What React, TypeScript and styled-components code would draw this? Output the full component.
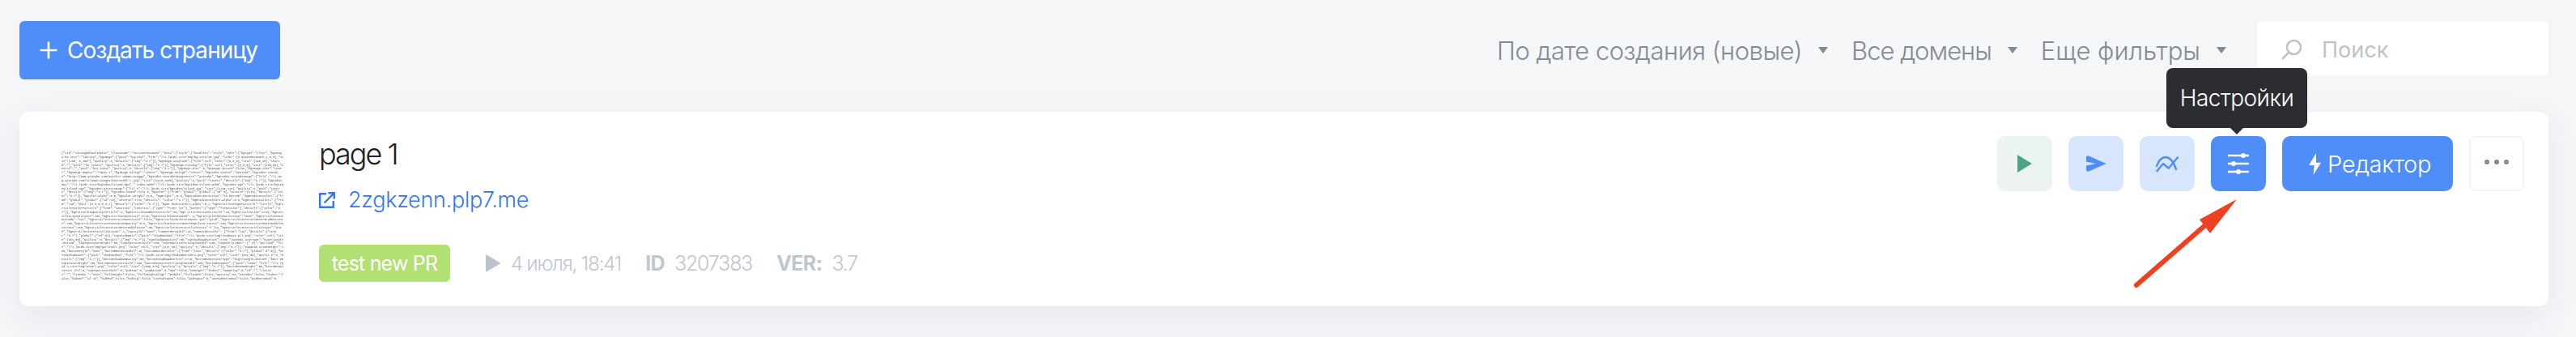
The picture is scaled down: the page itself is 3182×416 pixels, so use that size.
import styled, { createGlobalStyle } from "styled-components";
import { Plus } from "lucide-react";

const thumbText = `{"sid":"secoXQbdh94f3ipzzz","className":"SectionMetaHtml","data":{"style":{"headlers":"style","edit":{"bgType":"clear","bgImage.bo
urce":"library","bgImage":{"pack":"bg-tech","file":"//i.lpcdn.site/img/bg-tech/10.jpg","color":[0.5444850290913,1,0.5],"size":[200,
0,100"],"quality":8,"details":{"img":"3.7"}},"bgImage.Unsplash":{"file":null,"color":[0,0,0],"size":[200,80],"search":"","pack":"bu
siness","quality":8,"details":{"img":"3.7"}},"bgImage.Pixabay":{"file":null,"color":[0,0,0],"size":[200,80],"search":"","pack":"bus
iness","quality":3,"details":{"img":"3.7"}},"bgImage.Blur":0,"bgImage.Attach":false,"bgImage.Size":"cover","bgImage.Repeat":"repea
t","bgImage.Valign":"center","bgImage.Halign":"center","bgVideo.Source":"youtube","bgVideo.Youtube":"http://www.youtube.com/watch?v
=Down-M2ZQQA","bgVideo.YoutubeImageSource":"youtube","bgVideo.YoutubeImage":{"file":"//i.img.youtube.com/vi/Down-M2ZQ04/maxresdef
t.jpg","size":[1920,1080],"quality":8,"pack":"covers","details":{"img":"3.7"}},"bgVideo.Mp4":"//i.lpcdn.site/bgvideo/island.mp4","
Video.WebM":"//i.lpcdn.site/bgvideo/island.webm","bgVideo.Ogv":"//i.lpcdn.site/bgvideo/island.ogv","bgVideo.DirectImage":{"fil
e":"//i.lpcdn.site/bgvideo/island.jpg","size":[1280,720],"quality":8,"pack":"covers","details":{"img":"3.7"}},"bgVideo.Sound":fals
e,"bgColor":{"from":"global","global":{"id":0},"inverse":false,"details":{"color":"3.7"}},"bgColor.Alpha":0.5,"bgColor.Bright":0.5,
"bgBright":-0.5,"bgGradientDirection":"to bottom","bgGradientColor1":{"from":"global","global":{"id":26},"inverse":true,"details":
"color":"3.7"}},"bgGradientColor1.Alpha":0.6,"bgGradientColor2":{"from":"raw","data":[0.5,0.5,0.2],"details":{"color":"3.7"}},"bgGr
dientColor2.Alpha":0.2,"bgParticlesShapeParticle":"circle","bgParticlesColorParticle":{"from":"contrast","contrast":{"type":"front
lor"},"parent":{"type":"frontcolor"},"details":{"color":"3.7"}},"bgParticlesOpacityParticle":1,"bgParticlesNumberParticle":30,"bgP
articlesSizeParticle":15,"bgParticlesLine":true,"bgParticlesLineDistance":150,"bgParticlesMoveState":true,"bgParticlesMoveSpeed":
2,"bgParticlesMoveDirection":"none","bgParticlesMoveOutMode":"out","bgParticlesInteractHoverState":false,"bgParticlesInteractHover
ype":"grab","bgParticlesInteractHoverGrabDistance":250,"bgParticlesInteractHoverGrabOpacity":0.6,"bgParticlesInteractHoverRepulseD
stance":150,"bgParticlesInteractHoverBubbleDistance":150,"bgParticlesInteractHoverBubbleSize":30,"bgParticlesInteractClickState":f
lse,"bgParticlesInteractClickType":"push","bgParticlesInteractClickCount":2,"topStyle":"none","topBorderWidth":10,"topBorderColor":
{"from":"raw","details":{"color":"3.7"},"global":{"id":0}},"topShadowOvr":{"pack":"shadowxbow","file":"//i.lpcdn.site/img/shadowto
p/1.png","color":null,"size":[981,50],"quality":8,"details":{"img":"3.7"}},"topShadowOpacity":50,"topShadowAbsolute":true,"topSepa
atorType":"bigTriangle-bottom","topSeparatorHeight":50,"topSeparatorScale":100,"topSeparatorTriangleWidth":100,"topOverlaidOvr":{"
ck":"garland","file":"//i.lpcdn.site/img/garland/1.png","color":null,"size":[847,80],"quality":8,"details":{"img":"3.7"}},"topAnim
ationHeight":100,"bottomStyle":"none","bottomBorderWidth":10,"bottomBorderColor":{"from":"root","details":{"color":"3.7"},"global"
d":0}},"bottomShadowOvr":{"pack":"shadowxbow","file":"//i.lpcdn.site/img/shadowbottom/1.png","color":null,"size":[981,50],"qualit
y":8,"details":{"img":"3.7"}},"bottomShadowOpacity":50,"bottomShadowAbsolute":true,"bottomSeparatorType":"bigTriangle-bottom","bott
omSeparatorHeight":50,"bottomSeparatorScale":100,"bottomSeparatorTriangleWidth":100,"bottomSnowOvr":{"pack":"snow","file":"//i.lpcd
n.site/img/snow/1.png","color":null,"size":[2500,375],"quality":8,"details":{"img":"3.7"}},"bottomSnowHeight":50,"bottomSeparatorS
ift":0,"topSeparatorShift":0,"padTop":0,"padBottom":0,"wow":false,"wowType":"fadeIn","wowDelay":0,"id":"","classes":"","fixedIn
":"none","fullHeight":false,"fullHeightAlign":"middle","fullWidth":false,"opacity":50,"noIndex":false,"hideVr":false,"hideOn":"al
se","hideMd":false,"hideLg":false,"usePadTopVw":false,"padTopVw":5,"usePadBottomVw":false,"padBottomVw":5`;

const GlobalStyle = createGlobalStyle`
  html, body {
    margin: 0;
    padding: 0;
    background: #f4f6f8;
  }
  body {
    font-family: Inter, "Liberation Sans", sans-serif;
  }
`;

const Page = styled.div`
  width: 3182px;
  height: 416px;
  overflow: hidden;
  padding: 26px 34px 0 24px;
  box-sizing: border-box;
  background: #f4f6f8;
`;

const TopBar = styled.div`
  display: flex;
  align-items: flex-start;
  height: 72px;
  margin-bottom: 40px;
`;

const CreateButton = styled.div`
  display: flex;
  align-items: center;
  gap: 7px;
  width: 322px;
  height: 72px;
  box-sizing: border-box;
  padding-left: 20px;
  background: #4f8df8;
  border-radius: 6px;
  color: #fff;
  font-size: 28px;
  letter-spacing: -0.9px;
  white-space: nowrap;
`;

const Filters = styled.div`
  display: flex;
  align-items: flex-start;
  margin-left: auto;
`;

const Filter = styled.div<{ $gap: number; $spacing: number }>`
  display: flex;
  align-items: center;
  gap: 20px;
  height: 72px;
  margin-right: ${(p) => p.$gap}px;
  color: #838c95;
  font-size: 31px;
  font-weight: 300;
  letter-spacing: ${(p) => p.$spacing}px;
  white-space: nowrap;
`;

const Caret = styled.span`
  width: 0;
  height: 0;
  border-left: 6px solid transparent;
  border-right: 6px solid transparent;
  border-top: 8px solid #838c95;
`;

const Search = styled.div`
  display: flex;
  align-items: center;
  gap: 24px;
  width: 360px;
  height: 68px;
  box-sizing: border-box;
  padding: 2px 0 0 30px;
  background: #fff;
  border-radius: 6px;
  color: #bcc3ca;
  font-size: 27px;
  font-weight: 400;
`;

const Card = styled.div`
  display: flex;
  align-items: stretch;
  height: 240px;
  box-sizing: border-box;
  padding: 46px 30px 30px 48px;
  background: #fff;
  border-radius: 12px;
  box-shadow: 0 12px 40px rgba(60, 70, 90, 0.08);
`;

const Thumb = styled.div`
  width: 284px;
  height: 163px;
  flex-shrink: 0;
  overflow: hidden;
  margin-right: 38px;
  padding: 3px 4px 0;
  box-sizing: border-box;
  background: #fbfbfb;
  color: #555;
  font-family: "Liberation Mono", monospace;
  font-size: 3.6px;
  line-height: 4.85px;
  word-break: break-all;
  filter: blur(0.2px);
`;

const Info = styled.div`
  display: flex;
  flex-direction: column;
  align-items: flex-start;
  flex: 1;
`;

const Title = styled.div`
  margin-top: -19px;
  height: 50px;
  color: #1f2126;
  font-size: 36px;
  line-height: 50px;
  font-weight: 300;
  letter-spacing: -2px;
`;

const DomainLink = styled.div`
  display: flex;
  align-items: center;
  gap: 16px;
  margin-top: 12px;
  color: #3277f0;
  font-size: 27px;
  font-weight: 300;
  line-height: 40px;
  letter-spacing: -0.3px;
`;

const MetaRow = styled.div`
  display: flex;
  align-items: center;
  margin-top: auto;
  color: #c0c6ce;
  font-size: 25px;
  font-weight: 300;
  letter-spacing: -1.2px;
  white-space: nowrap;
`;

const Tag = styled.div`
  display: flex;
  align-items: center;
  justify-content: center;
  width: 162px;
  height: 46px;
  margin-right: 43px;
  background: #b1e073;
  border-radius: 6px;
  color: #fff;
  font-size: 25px;
  font-weight: 400;
  letter-spacing: -0.8px;
`;

const MetaItem = styled.div`
  display: flex;
  align-items: center;
  gap: 12px;
  margin-right: 30px;
`;

const DateText = styled.span`
  font-size: 24px;
  letter-spacing: -1.15px;
`;

const MetaLabel = styled.b`
  font-weight: 700;
  letter-spacing: -0.6px;
`;

const Actions = styled.div`
  display: flex;
  align-items: flex-start;
  gap: 20px;
  margin-top: -16px;
`;

const IconButton = styled.div<{ $bg: string }>`
  position: relative;
  display: flex;
  align-items: center;
  justify-content: center;
  width: 68px;
  height: 68px;
  background: ${(p) => p.$bg};
  border-radius: 10px;
`;

const EditorButton = styled.div`
  display: flex;
  align-items: center;
  justify-content: center;
  gap: 8px;
  width: 211px;
  height: 68px;
  box-sizing: border-box;
  padding-left: 6px;
  background: #4f8df8;
  border-radius: 10px;
  color: #fff;
  font-size: 29px;
  font-weight: 300;
  letter-spacing: -0.3px;
`;

const MoreButton = styled.div`
  display: flex;
  align-items: center;
  justify-content: center;
  gap: 6px;
  width: 68px;
  height: 68px;
  box-sizing: border-box;
  padding-bottom: 4px;
  border: 2px solid #f2f3f5;
  border-radius: 6px;
`;

const Dot = styled.span`
  width: 6px;
  height: 6px;
  border-radius: 50%;
  background: #7f8a94;
`;

const Tooltip = styled.div`
  position: absolute;
  left: -55px;
  bottom: 78px;
  display: flex;
  align-items: center;
  justify-content: center;
  width: 174px;
  height: 74px;
  background: #2b2d33;
  border-radius: 8px;
  color: #fff;
  font-size: 28px;
  font-weight: 300;
  letter-spacing: -0.5px;

  &::after {
    content: "";
    position: absolute;
    left: 78px;
    bottom: -8px;
    border-left: 9px solid transparent;
    border-right: 9px solid transparent;
    border-top: 9px solid #2b2d33;
  }
`;

const PointerArrow = styled.svg`
  position: absolute;
  left: -97px;
  top: 72px;
`;

export default function App() {
  return (
    <>
      <GlobalStyle />
      <Page>
        <TopBar>
          <CreateButton>
            <Plus size={32} strokeWidth={2} color="#fff" />
            Создать страницу
          </CreateButton>
          <Filters>
            <Filter $gap={29} $spacing={-0.5}>
              По дате создания (новые)
              <Caret />
            </Filter>
            <Filter $gap={29} $spacing={-1}>
              Все домены
              <Caret />
            </Filter>
            <Filter $gap={38} $spacing={0}>
              Еще фильтры
              <Caret />
            </Filter>
            <Search>
              <svg width="26" height="26" viewBox="0 0 26 26" fill="none" stroke="#bcc3ca" strokeWidth="2.6">
                <circle cx="15.5" cy="10.5" r="8.5" />
                <path d="M9 17 2 24" strokeLinecap="round" />
              </svg>
              Поиск
            </Search>
          </Filters>
        </TopBar>
        <Card>
          <Thumb>{thumbText}</Thumb>
          <Info>
            <Title>page 1</Title>
            <DomainLink>
              <svg width="20" height="20" viewBox="0 0 20 20" fill="none" stroke="#3277f0" strokeWidth="2.4">
                <path d="M9 2.2H1.2v16.600h16.600V11" />
                <path d="M6.500 13.500 18 2M11.500 1.200h7.300v7.300" />
              </svg>
              2zgkzenn.plp7.me
            </DomainLink>
            <MetaRow>
              <Tag>test new PR</Tag>
              <MetaItem>
                <svg width="20" height="22" viewBox="0 0 20 22" fill="#bcc3cc">
                  <path d="M1 1.500v19a1 1 0 0 0 1.500.8L19.500 11 2.500.7A1 1 0 0 0 1 1.500z" />
                </svg>
                <DateText>4 июля, 18:41</DateText>
              </MetaItem>
              <MetaItem>
                <MetaLabel>ID</MetaLabel>
                3207383
              </MetaItem>
              <MetaItem>
                <MetaLabel>VER:</MetaLabel>
                3.7
              </MetaItem>
            </MetaRow>
          </Info>
          <Actions>
            <IconButton $bg="#ecf4f1">
              <svg width="18" height="22" viewBox="0 0 18 22" fill="#4ea384">
                <path d="M0 0 18 11 0 22z" />
              </svg>
            </IconButton>
            <IconButton $bg="#d7e6fc">
              <svg width="25" height="20" viewBox="0 0 25 20" fill="#4f8df8">
                <path d="M0 2.500C0 .8 1.600-.2 3 .5L24.700 10 3 19.500C1.600 20.200 0 19.200 0 17.500V12.500L12 10 0 7.500z" />
              </svg>
            </IconButton>
            <IconButton $bg="#d7e6fc">
              <svg width="28" height="21" viewBox="0 0 28 21" fill="none" stroke="#4f8df8" strokeWidth="2.400" strokeLinecap="round" strokeLinejoin="round">
                <path d="M1 13C4 5 8 2 12 2s9 3 13 15" />
                <path d="M1.500 19 9 10l6.700 5.700L27 2.300" />
              </svg>
            </IconButton>
            <IconButton $bg="#4f8df8">
              <svg width="26" height="26" viewBox="0 0 26 26" fill="#fff">
                <path d="M0 3h26M0 13h26M0 23h26" stroke="#fff" strokeWidth="2.400" />
                <circle cx="19" cy="3" r="3" />
                <circle cx="7" cy="13" r="3" />
                <circle cx="13" cy="23" r="3" />
              </svg>
              <Tooltip>Настройки</Tooltip>
              <PointerArrow width="130" height="118" viewBox="0 0 130 118">
                <path d="M5 112 90 38" stroke="#ee4023" strokeWidth="6" strokeLinecap="round" />
                <path d="M129 6 83 31 96 48z" fill="#ee4023" />
              </PointerArrow>
            </IconButton>
            <EditorButton>
              <svg width="15" height="27" viewBox="0 0 15 27" fill="#fff">
                <path d="M9 0 0 15h6.700l-1 11.700L15 11.700H9z" />
              </svg>
              Редактор
            </EditorButton>
            <MoreButton>
              <Dot />
              <Dot />
              <Dot />
            </MoreButton>
          </Actions>
        </Card>
      </Page>
    </>
  );
}
